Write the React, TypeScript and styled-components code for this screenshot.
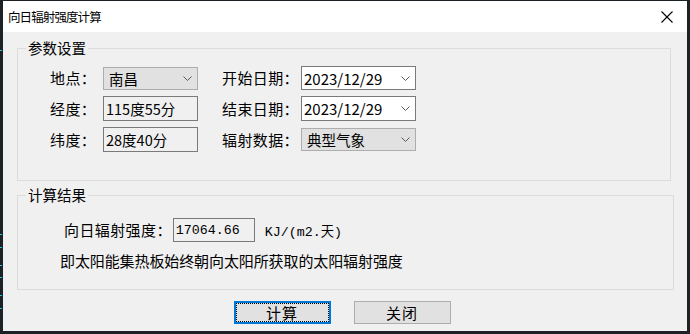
import React from 'react';
import styled, { createGlobalStyle } from 'styled-components';

const GlobalStyle = createGlobalStyle`
    html, body {
        margin: 0;
        padding: 0;
        background: #1c2126;
    }
    body {
        font-family: "Noto Sans CJK SC", "Noto Sans", sans-serif;
        color: #000;
    }
`;

const Page = styled.div`
    display: flex;
    width: 690px;
    height: 334px;
    padding-top: 1px;
    box-sizing: border-box;
    overflow: hidden;
`;

const Backdrop = styled.svg`
    flex: 0 0 3px;
    height: 333px;
`;

const Window = styled.div`
    display: flex;
    flex-direction: column;
    width: 684px;
    height: 330px;
    background: #f0f0f0;
`;

const TitleBar = styled.div`
    display: flex;
    align-items: center;
    justify-content: space-between;
    height: 31px;
    padding: 0 14px 0 5px;
    background: #fff;
    font-size: 12.5px;
    letter-spacing: -0.9px;
`;

const Body = styled.div`
    display: flex;
    flex-direction: column;
    padding: 16px 0 0 14px;
`;

const Group = styled.div<{ $width: number; $height: number; $top?: number }>`
    position: relative;
    width: ${p => p.$width}px;
    height: ${p => p.$height}px;
    margin-top: ${p => p.$top || 0}px;
    border: 1px solid #dcdcdc;
    box-sizing: border-box;
`;

const Legend = styled.span`
    position: absolute;
    top: -11px;
    left: 8px;
    padding: 0 2px;
    background: #f0f0f0;
    font-size: 14.5px;
    line-height: 20px;
`;

const ParamGrid = styled.div`
    display: grid;
    grid-template-columns: 53px 95px 103px 115px;
    grid-template-rows: 24px 25px 25px;
    row-gap: 6px;
    padding: 17px 0 0 32px;
    align-items: center;
`;

const Label = styled.span<{ $indent?: number }>`
    font-size: 15px;
    letter-spacing: 0.4px;
    line-height: 20px;
    padding-left: ${p => p.$indent || 0}px;
    white-space: nowrap;
`;

const Field = styled.div<{ $kind: 'combo' | 'date' | 'text'; $height: number; $mono?: boolean }>`
    display: flex;
    align-items: center;
    justify-content: space-between;
    height: ${p => p.$height}px;
    box-sizing: border-box;
    padding: 0 5px 0 ${p => (p.$kind === 'combo' ? 5 : 2)}px;
    border: 1px solid ${p => (p.$kind === 'combo' ? '#adadad' : '#7a7a7a')};
    background: ${p => (p.$kind === 'combo' ? '#e1e1e1' : p.$kind === 'date' ? '#fff' : '#f0f0f0')};
    font-family: ${p => (p.$mono ? '"Liberation Mono", "Noto Sans CJK SC", monospace' : '"Noto Sans CJK SC", sans-serif')};
    font-size: ${p => (p.$mono ? '13.3px' : p.$kind === 'date' ? '15px' : '14.5px')};
    white-space: nowrap;
`;

const ResultRow = styled.div`
    display: flex;
    align-items: center;
    padding: 22px 0 0 46px;
`;

const ResultBox = styled(Field)`
    width: 82px;
    margin-left: 1px;
`;

const Unit = styled.span`
    margin-left: 10px;
    font-family: "Liberation Mono", "Noto Sans CJK SC", monospace;
    font-size: 13.3px;
`;

const Note = styled.div`
    padding: 9px 0 0 42px;
    font-size: 15px;
    line-height: 20px;
    letter-spacing: -0.1px;
`;

const Buttons = styled.div`
    display: flex;
    justify-content: center;
    gap: 23px;
    margin-top: 11px;
    padding-right: 20px;
`;

const Button = styled.div<{ $focused?: boolean }>`
    display: flex;
    align-items: center;
    justify-content: center;
    width: 97px;
    height: 23px;
    box-sizing: border-box;
    background: #e1e1e1;
    border: ${p => (p.$focused ? '2px solid #0078d7' : '1px solid #adadad')};
    font-size: 15px;
    letter-spacing: 1px;
    outline: ${p => (p.$focused ? '1px dotted #000' : 'none')};
    outline-offset: -3px;
`;

const Chevron = () => (
    <svg width="9" height="5" viewBox="0 0 9 5">
        <polyline points="0.5,0.5 4.5,4.5 8.5,0.5" fill="none" stroke="#5a5a5a" strokeWidth="1" />
    </svg>
);

const CloseIcon = () => (
    <svg width="12" height="12" viewBox="0 0 12 12">
        <path d="M0.5 0.5 L11.5 11.5 M11.5 0.5 L0.5 11.5" stroke="#000" strokeWidth="1.1" />
    </svg>
);

const marks = [49, 233, 246, 264, 276, 294, 307];

export default function App() {
    return (
        <>
            <GlobalStyle />
            <Page>
                <Backdrop viewBox="0 0 3 333">
                    {marks.map(y => (
                        <rect key={y} x="0" y={y} width="2" height="1" fill="#27c4d8" />
                    ))}
                </Backdrop>
                <Window>
                    <TitleBar>
                        <span>向日辐射强度计算</span>
                        <CloseIcon />
                    </TitleBar>
                    <Body>
                        <Group $width={654} $height={133}>
                            <Legend>参数设置</Legend>
                            <ParamGrid>
                                <Label>地点：</Label>
                                <Field $kind="combo" $height={23}>
                                    南昌
                                    <Chevron />
                                </Field>
                                <Label $indent={24}>开始日期：</Label>
                                <Field $kind="date" $height={24}>
                                    2023/12/29
                                    <Chevron />
                                </Field>

                                <Label>经度：</Label>
                                <Field $kind="text" $height={25}>115度55分</Field>
                                <Label $indent={24}>结束日期：</Label>
                                <Field $kind="date" $height={25}>
                                    2023/12/29
                                    <Chevron />
                                </Field>

                                <Label>纬度：</Label>
                                <Field $kind="text" $height={25}>28度40分</Field>
                                <Label $indent={24}>辐射数据：</Label>
                                <Field $kind="combo" $height={23}>
                                    典型气象
                                    <Chevron />
                                </Field>
                            </ParamGrid>
                        </Group>

                        <Group $width={657} $height={95} $top={14}>
                            <Legend>计算结果</Legend>
                            <ResultRow>
                                <Label>向日辐射强度：</Label>
                                <ResultBox $kind="text" $height={24} $mono>17064.66</ResultBox>
                                <Unit>KJ/(m2.天)</Unit>
                            </ResultRow>
                            <Note>即太阳能集热板始终朝向太阳所获取的太阳辐射强度</Note>
                        </Group>

                        <Buttons>
                            <Button $focused>计算</Button>
                            <Button>关闭</Button>
                        </Buttons>
                    </Body>
                </Window>
            </Page>
        </>
    );
}
